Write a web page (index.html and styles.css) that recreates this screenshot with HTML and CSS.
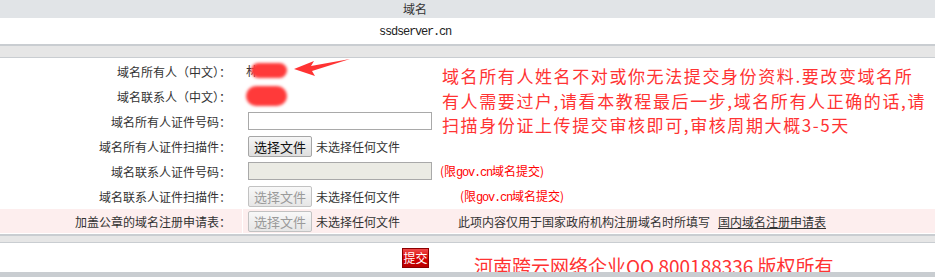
FILE: index.html
```html
<!DOCTYPE html>
<html lang="zh-CN">
<head>
    <meta charset="UTF-8">
    <title>域名过户</title>
    <link rel="stylesheet" href="styles.css">
</head>
<body>
    <div class="page">
        <div class="head"><span>域名</span></div>
        <div class="domain"><span>ssdserver.cn</span></div>
        <div class="band"></div>

        <div class="form">
            <div class="label">域名所有人（中文）：</div>
            <div class="field"></div>

            <div class="label">域名联系人（中文）：</div>
            <div class="field"></div>

            <div class="label">域名所有人证件号码：</div>
            <div class="field"><span class="text-input"></span></div>

            <div class="label">域名所有人证件扫描件：</div>
            <div class="field"><span class="file-btn">选择文件</span><span class="file-none">未选择任何文件</span></div>

            <div class="label">域名联系人证件号码：</div>
            <div class="field"><span class="text-input disabled"></span><span class="limit">(限<i>gov.cn</i>域名提交)</span></div>

            <div class="label">域名联系人证件扫描件：</div>
            <div class="field"><span class="file-btn disabled">选择文件</span><span class="file-none">未选择任何文件</span><span class="limit far">(限<i>gov.cn</i>域名提交)</span></div>

            <div class="label pink">加盖公章的域名注册申请表：</div>
            <div class="field pink"><span class="file-btn disabled">选择文件</span><span class="file-none">未选择任何文件</span><span class="note">此项内容仅用于国家政府机构注册域名时所填写</span><a class="note-link" href="#">国内域名注册申请表</a></div>
        </div>

        <div class="band small"></div>
        <div class="submit-row">
            <span class="submit">提交</span>
            <div class="copyright">河南跨云网络企业QQ 800188336 版权所有</div>
        </div>
        <div class="bottom-bar"></div>

        <!-- annotations drawn on top of the screenshot -->
        <span class="name-start">林</span>
        <div class="blot one"></div>
        <div class="blot two"></div>
        <svg class="arrow" width="70" height="20" viewBox="0 0 70 20">
            <polygon points="2,11 22,3 19,8 58,1 20,13 23,18" fill="#ff3333"/>
        </svg>
        <div class="tip">域名所有人姓名不对或你无法提交身份资料.要改变域名所<br>有人需要过户,请看本教程最后一步,域名所有人正确的话,请<br>扫描身份证上传提交审核即可,审核周期大概3-5天</div>
    </div>
</body>
</html>
```

FILE: styles.css
```css
body {
    margin: 0;
    font-family: "Noto Sans CJK SC", "Liberation Sans", sans-serif;
    font-size: 12px;
    color: #333;
    background: #fff;
}
.page {
    position: relative;
    width: 935px;
    height: 277px;
    overflow: hidden;
}
.head {
    height: 18px;
    background: #e1e4e7;
    line-height: 18px;
}
.head span,
.domain span {
    display: block;
    width: 830px;
    text-align: center;
}
.head span {
    font-size: 12px;
    color: #333;
}
.domain {
    height: 26px;
    line-height: 29px;
}
.domain span {
    font-family: "Liberation Mono", monospace;
    font-size: 12px;
    letter-spacing: -1.2px;
    color: #222;
}
.band {
    height: 11px;
    background: #e6e6e6;
    border-top: 2px solid #c9cdd1;
    border-bottom: 1px solid #c9cdd1;
}
.band.small {
    height: 6px;
}
.form {
    display: grid;
    grid-template-columns: 242px 1fr;
    grid-auto-rows: 24px;
    gap: 1px;
    padding: 1px 0;
}
.label {
    text-align: right;
    padding-right: 11px;
    line-height: 25px;
    font-size: 12px;
    color: #333;
}
.field {
    display: flex;
    align-items: center;
    padding-left: 5px;
    white-space: nowrap;
}
.pink {
    background: #fdeeee;
}
.text-input {
    width: 182px;
    height: 16px;
    border: 1px solid #a9a9a9;
    background: #fff;
}
.text-input.disabled {
    background: #ebebe4;
}
.file-btn {
    box-sizing: border-box;
    width: 64px;
    height: 21px;
    border: 1px solid #a6a6a6;
    border-radius: 2px;
    background: linear-gradient(#f6f6f6, #dedede);
    font-size: 13px;
    line-height: 19px;
    text-align: center;
    color: #111;
}
.file-btn.disabled {
    color: #9a9a9a;
    border-color: #c2c2c2;
    background: linear-gradient(#f8f8f8, #e6e6e6);
}
.file-none {
    margin-left: 4px;
    font-size: 12px;
    color: #333;
}
.limit {
    margin-left: 8px;
    font-size: 12px;
    color: #ff0000;
}
.limit i {
    font-style: normal;
    font-family: "Liberation Mono", monospace;
    letter-spacing: -1.2px;
    font-size: 12px;
}
.limit.far {
    margin-left: 60px;
}
.note {
    margin-left: 58px;
    color: #333;
}
.note-link {
    margin-left: 8px;
    color: #333;
}
.submit-row {
    position: relative;
    height: 29px;
}
.submit {
    position: absolute;
    left: 402px;
    top: 5px;
    box-sizing: border-box;
    width: 27px;
    height: 20px;
    border: 1px solid #8c0000;
    background: linear-gradient(#ef4a4a, #d40000 55%, #b80000);
    color: #fff;
    font-size: 12px;
    line-height: 18px;
    text-align: center;
    white-space: nowrap;
}
.copyright {
    position: absolute;
    left: 474px;
    top: 13px;
    font-size: 19px;
    line-height: 19px;
    color: #ff3333;
    white-space: nowrap;
}
.bottom-bar {
    position: relative;
    height: 5px;
    background: #c9cdd1;
}
.blot {
    position: absolute;
    background: #ff3a3a;
    filter: blur(1.5px);
    border-radius: 8px;
}
.blot.one {
    left: 251px;
    top: 63px;
    width: 36px;
    height: 15px;
}
.blot.two {
    left: 246px;
    top: 86px;
    width: 41px;
    height: 20px;
    border-radius: 10px;
}
.name-start {
    position: absolute;
    left: 246px;
    top: 62px;
    font-size: 12px;
    color: #333;
}
.arrow {
    position: absolute;
    left: 292px;
    top: 58px;
}
.tip {
    position: absolute;
    left: 442px;
    top: 64px;
    font-size: 17px;
    line-height: 24.5px;
    letter-spacing: 1.6px;
    color: #ff3333;
    white-space: nowrap;
}
```
